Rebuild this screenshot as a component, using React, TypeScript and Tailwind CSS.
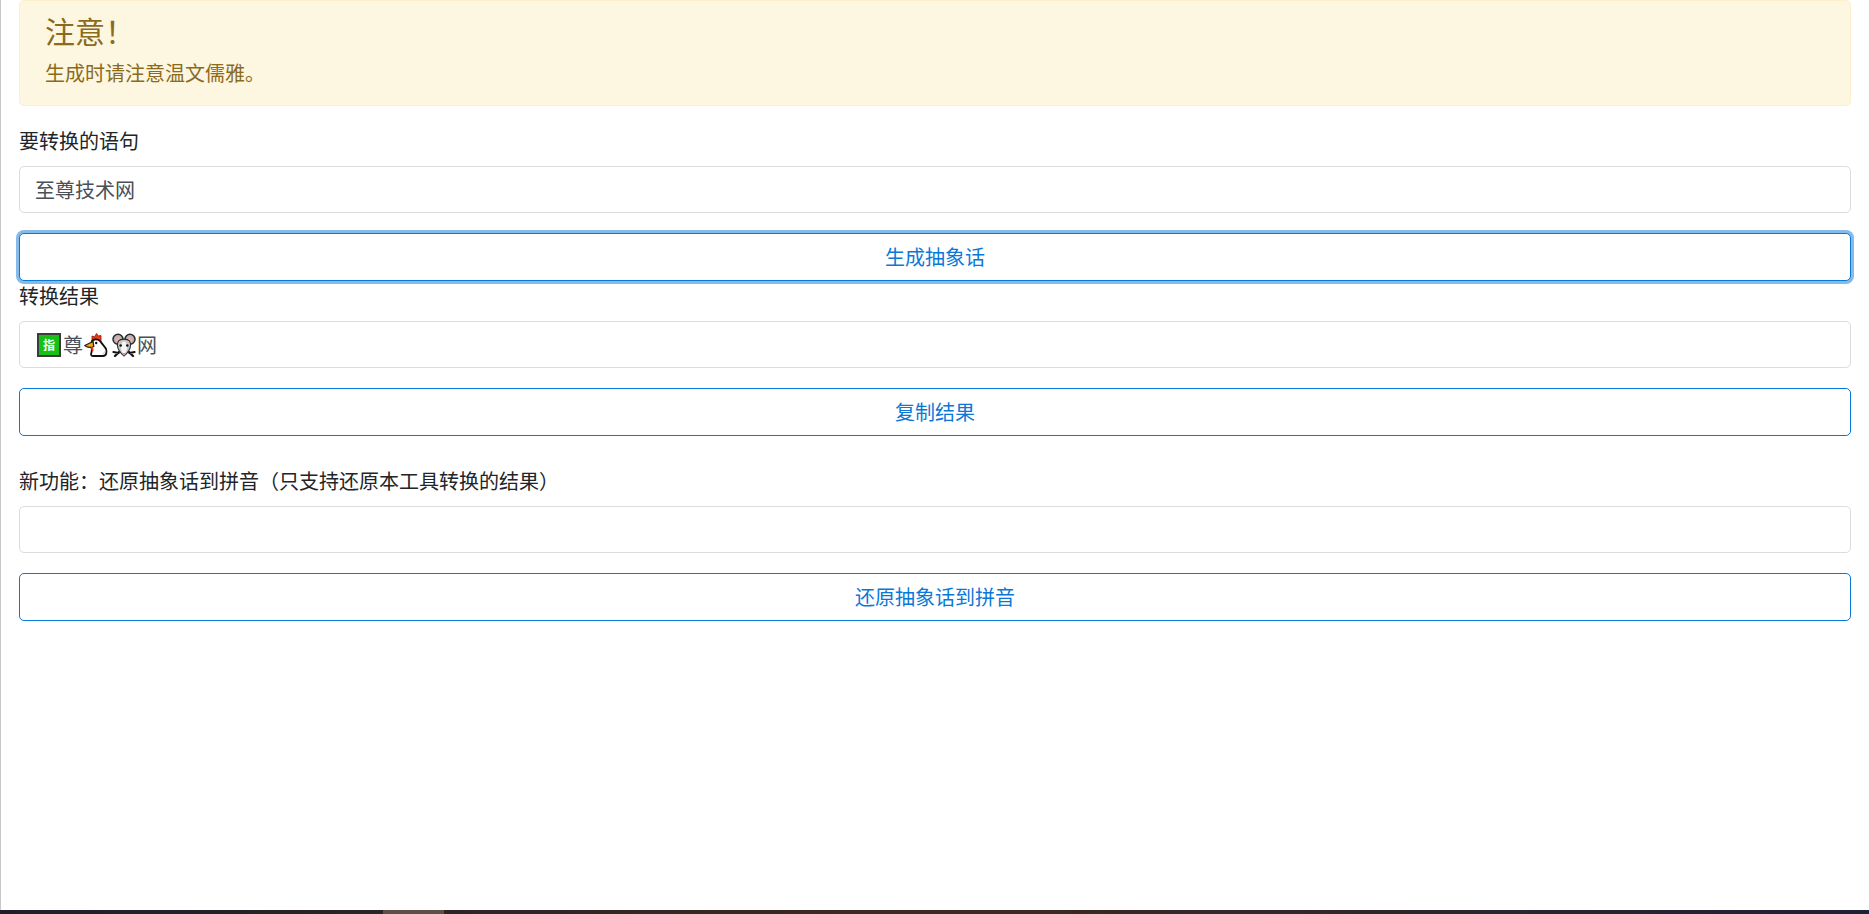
import React from "react";

const fontStack = "font-['Liberation_Sans','Noto_Sans_CJK_SC',sans-serif]";

const inputBox =
  "h-[47px] w-full rounded-[5px] border border-[#dcdcdc] bg-white px-[15px] text-[20px] text-[#495057] outline-none";

const outlineButton =
  "h-[48px] w-full rounded-[5px] border border-[#0a78d8] bg-white pt-[2px] text-[20px] leading-[30px] text-[#0a78d8]";

const Field = ({ label, children }: { label: string; children: React.ReactNode }) => (
  <div className="flex flex-col">
    <label className="mb-[8px] text-[20px] leading-[32px] text-[#212529]">{label}</label>
    {children}
  </div>
);

// 🈯 square with the finger character
const ReservedIcon = () => (
  <svg viewBox="0 0 24 24" className="h-[24px] w-[24px] shrink-0">
    <rect x="1" y="1" width="22" height="22" fill="#16c116" stroke="#3c3c3c" strokeWidth="2" />
    <text x="12" y="17" textAnchor="middle" fontSize="12" fontWeight="700" fill="#ffffff" fontFamily="'Noto Sans CJK SC', sans-serif">
      指
    </text>
  </svg>
);

// 🐔
const ChickenIcon = () => (
  <svg viewBox="0 0 24 24" className="h-[24px] w-[24px] shrink-0">
    <path d="M8 8L8 3 10.500 3.800 12.500 .5 14.500 3 17 2.500 17 9z" fill="#ee3a12" stroke="#8a1c08" strokeWidth="0.800" strokeLinejoin="round" />
    <path d="M7.500 10C7.500 6 14 5 16.500 8.500 18 11 20.500 13 22 16 23.200 19 22.500 23 19 23H9C7 23 6.500 21.500 7.500 19.500 8.500 17 7 14 7.500 10z" fill="#ffffff" stroke="#111111" strokeWidth="1.800" strokeLinejoin="round" />
    <path d="M18 22c2 0 3.500-2 3.300-5l-1.500 2-1 1.500z" fill="#d8d8d8" />
    <path d="M9 8.500L.8 12.500C3 14.500 7 15.200 9.800 13.500z" fill="#f7a90f" stroke="#2a1c06" strokeWidth="1.300" strokeLinejoin="round" />
    <path d="M8.200 14c1.400 1 1.800 3 .9 4.500-1.500-.8-2.200-3-2-4.500z" fill="#ee3a12" />
    <circle cx="12.200" cy="10" r="1.200" fill="#111111" />
  </svg>
);

// 🐭
const MouseIcon = () => (
  <svg viewBox="0 0 24 24" className="h-[24px] w-[24px] shrink-0">
    <path d="M3 23l4-4M21 23l-4-4M1.500 19l5 1M22.500 19l-5 1" stroke="#111111" strokeWidth="2.200" strokeLinecap="round" />
    <circle cx="6" cy="6.200" r="5" fill="#b4b4b4" stroke="#2a2a2a" strokeWidth="1.500" />
    <circle cx="18" cy="6.200" r="5" fill="#b4b4b4" stroke="#2a2a2a" strokeWidth="1.500" />
    <circle cx="6" cy="6.500" r="2.500" fill="#f0aaa8" />
    <circle cx="18" cy="6.500" r="2.500" fill="#f0aaa8" />
    <path d="M6.500 8c2-2.500 9-2.500 11 0 1.800 3 .8 7-.5 9.200-1.200 2-3.300 4.800-5 5.800-1.700-1-3.800-3.800-5-5.800C5.700 15 4.700 11 6.500 8z" fill="#c6c6c6" stroke="#2a2a2a" strokeWidth="1.100" />
    <path d="M12 8.500c2.200 0 3.200 3.500 3.200 6.500 0 2.500-2 5-3.200 6.500-1.200-1.500-3.200-4-3.200-6.500 0-3 1-6.500 3.200-6.500z" fill="#f4f4f4" />
    <circle cx="8.700" cy="12.500" r="1.300" fill="#111111" />
    <circle cx="15.300" cy="12.500" r="1.300" fill="#111111" />
    <path d="M10 20h4l-2 3z" fill="#e88a8a" />
  </svg>
);

export default function App() {
  return (
    <div className={`flex h-[914px] w-full flex-col overflow-hidden bg-white ${fontStack}`}>
      <div className="flex flex-1 flex-col gap-[20px] border-l border-[#c8c8cc] pl-[18px] pr-[18px]">
        <div className="rounded-[5px] border border-[#fbf0cb] bg-[#fdf6e0] px-[25px] pb-[16px] pt-[14px] text-[#8a6a1c]">
          <h4 className="mb-[8px] text-[30px] leading-[36px]">{"注意\uFF01"}</h4>
          <p className="text-[20px] leading-[30px]">生成时请注意温文儒雅。</p>
        </div>

        <div className="flex flex-col">
          <Field label="要转换的语句">
            <input className={inputBox} readOnly defaultValue="至尊技术网" />
          </Field>
          <button className={`${outlineButton} mt-[20px] ring-[3px] ring-[#0a78d8]/50`}>生成抽象话</button>

          <Field label="转换结果">
            <div className="flex h-[47px] w-full items-center rounded-[5px] border border-[#dcdcdc] bg-white px-[15px] text-[20px] text-[#495057]">
              <span className="mx-[2px] flex items-center gap-[1px]">
                <ReservedIcon />
                <span className="ml-[1px] mt-[2px]">尊</span>
                <ChickenIcon />
                <span className="ml-[3px] flex">
                  <MouseIcon />
                </span>
                <span className="mt-[2px]">网</span>
              </span>
            </div>
          </Field>
          <button className={`${outlineButton} mt-[20px]`}>复制结果</button>

          <div className="mt-[30px]">
            <Field label={"新功能\uFF1A还原抽象话到拼音\uFF08只支持还原本工具转换的结果\uFF09"}>
              <input className={inputBox} readOnly />
            </Field>
          </div>
          <button className={`${outlineButton} mt-[20px]`}>还原抽象话到拼音</button>
        </div>
      </div>
      {/* desktop showing through under the window */}
      <div className="flex h-[4px] shrink-0 bg-gradient-to-r from-[#1e1e2a] via-[#3e2a22] to-[#1e2036]">
        <div className="ml-[383px] w-[61px] bg-[#5e5048]" />
      </div>
    </div>
  );
}
